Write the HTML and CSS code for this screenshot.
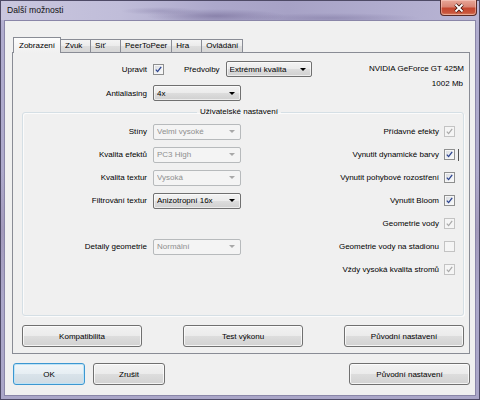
FILE: index.html
```html
<!DOCTYPE html>
<html lang="cs">
<head>
<meta charset="utf-8">
<title>Další možnosti</title>
<link rel="stylesheet" href="styles.css">
</head>
<body>
<div class="window">
  <div class="titlebar">
    <span class="title">Další možnosti</span>
    <div class="close" aria-label="Zavřít">
      <svg width="12" height="10" viewBox="0 0 12 10"><path d="M2.5 1.5 L9.5 8.5 M9.5 1.5 L2.5 8.5" stroke="#3b1109" stroke-width="3.4" fill="none"/><path d="M2.5 1.5 L9.5 8.5 M9.5 1.5 L2.5 8.5" stroke="#fff" stroke-width="1.8" fill="none"/></svg>
    </div>
  </div>
  <div class="client">
    <div class="tabs">
      <div class="tab active">Zobrazení</div>
      <div class="tab">Zvuk</div>
      <div class="tab">Síť</div>
      <div class="tab">PeerToPeer</div>
      <div class="tab">Hra</div>
      <div class="tab">Ovládání</div>
    </div>
    <div class="panel">
      <div class="top">
        <div class="top-grid">
          <span class="lbl">Upravit</span>
          <div class="ctrl-line">
            <span class="chk"><svg width="7" height="7" viewBox="0 0 7 7"><path d="M0.8 3.6 L2.6 5.6 L6.2 0.8" fill="none" stroke="#2c438f" stroke-width="1.3"/></svg></span>
            <span class="preset-lbl">Předvolby</span>
            <div class="combo w-preset"><span class="val">Extrémní kvalita</span><span class="arrow"></span></div>
          </div>
          <span class="lbl">Antialiasing</span>
          <div class="combo w-std"><span class="val">4x</span><span class="arrow"></span></div>
        </div>
        <div class="gpu">
          <span>NVIDIA GeForce GT 425M</span>
          <span>1002 Mb</span>
        </div>
      </div>
      <fieldset class="group">
        <legend>Uživatelské nastavení</legend>
        <div class="row">
          <div class="left"><span class="rlbl">Stíny</span><div class="combo w-std disabled"><span class="val">Velmi vysoké</span><span class="arrow"></span></div></div>
          <div class="right"><span>Přídavné efekty</span><span class="chk disabled"><svg width="7" height="7" viewBox="0 0 7 7"><path d="M0.8 3.6 L2.6 5.6 L6.2 0.8" fill="none" stroke="#a9a9a9" stroke-width="1.2"/></svg></span></div>
        </div>
        <div class="row">
          <div class="left"><span class="rlbl">Kvalita efektů</span><div class="combo w-std disabled"><span class="val">PC3 High</span><span class="arrow"></span></div></div>
          <div class="right"><span>Vynutit dynamické barvy</span><span class="chk"><svg width="7" height="7" viewBox="0 0 7 7"><path d="M0.8 3.6 L2.6 5.6 L6.2 0.8" fill="none" stroke="#2c438f" stroke-width="1.3"/></svg></span><span class="caret"></span></div>
        </div>
        <div class="row">
          <div class="left"><span class="rlbl">Kvalita textur</span><div class="combo w-std disabled"><span class="val">Vysoká</span><span class="arrow"></span></div></div>
          <div class="right"><span>Vynutit pohybové rozostření</span><span class="chk"><svg width="7" height="7" viewBox="0 0 7 7"><path d="M0.8 3.6 L2.6 5.6 L6.2 0.8" fill="none" stroke="#2c438f" stroke-width="1.3"/></svg></span></div>
        </div>
        <div class="row">
          <div class="left"><span class="rlbl">Filtrování textur</span><div class="combo w-std"><span class="val">Anizotropní 16x</span><span class="arrow"></span></div></div>
          <div class="right"><span>Vynutit Bloom</span><span class="chk"><svg width="7" height="7" viewBox="0 0 7 7"><path d="M0.8 3.6 L2.6 5.6 L6.2 0.8" fill="none" stroke="#2c438f" stroke-width="1.3"/></svg></span></div>
        </div>
        <div class="row">
          <div class="left"></div>
          <div class="right"><span>Geometrie vody</span><span class="chk disabled"><svg width="7" height="7" viewBox="0 0 7 7"><path d="M0.8 3.6 L2.6 5.6 L6.2 0.8" fill="none" stroke="#a9a9a9" stroke-width="1.2"/></svg></span></div>
        </div>
        <div class="row">
          <div class="left"><span class="rlbl">Detaily geometrie</span><div class="combo w-std disabled"><span class="val">Normální</span><span class="arrow"></span></div></div>
          <div class="right"><span>Geometrie vody na stadionu</span><span class="chk disabled"></span></div>
        </div>
        <div class="row">
          <div class="left"></div>
          <div class="right"><span>Vždy vysoká kvalita stromů</span><span class="chk disabled"><svg width="7" height="7" viewBox="0 0 7 7"><path d="M0.8 3.6 L2.6 5.6 L6.2 0.8" fill="none" stroke="#a9a9a9" stroke-width="1.2"/></svg></span></div>
        </div>
      </fieldset>
      <div class="panel-buttons">
        <button class="btn btn-panel">Kompatibilita</button>
        <button class="btn btn-panel">Test výkonu</button>
        <button class="btn btn-panel">Původní nastavení</button>
      </div>
    </div>
    <div class="dialog-buttons">
      <button class="btn btn-small default">OK</button>
      <button class="btn btn-small">Zrušit</button>
      <button class="btn btn-reset">Původní nastavení</button>
    </div>
  </div>
</div>
</body>
</html>
```
FILE: styles.css
```css
* { box-sizing: border-box; }
html, body { margin: 0; padding: 0; }
body {
  width: 480px;
  height: 400px;
  overflow: hidden;
  font-family: "Liberation Sans", Arial, sans-serif;
  font-size: 8px;
  color: #000;
  background: #aaa6c8;
}
.window {
  width: 480px;
  height: 400px;
  border: 1px solid #4e4a66;
  background:
    linear-gradient(180deg, rgba(0,0,0,0) 170px, rgba(120,90,120,0.18) 230px, rgba(0,0,0,0) 300px),
    linear-gradient(180deg, #bdb9d7 0, #b0acce 30px, #aaa6c8 100%);
  display: flex;
  flex-direction: column;
}
.titlebar {
  height: 19px;
  flex: none;
  display: flex;
  align-items: flex-start;
  background:
    radial-gradient(ellipse 70px 7px at 215px 15px, rgba(110,100,145,0.55), rgba(110,100,145,0)),
    radial-gradient(ellipse 90px 5px at 330px 17px, rgba(120,112,155,0.45), rgba(120,112,155,0)),
    radial-gradient(ellipse 40px 4px at 160px 10px, rgba(120,112,155,0.35), rgba(120,112,155,0)),
    linear-gradient(90deg, #c9c6de 0%, #c0bdd9 25%, #aca8cb 45%, #a7a2c6 60%, #b0acce 80%, #b9b5d4 100%);
}
.title {
  padding-left: 6px;
  line-height: 19px;
  font-size: 8.6px;
  color: #111;
}
.close {
  margin-left: auto;
  margin-right: 2px;
  margin-top: -1px;
  width: 37px;
  height: 16px;
  border: 1px solid #5a2a26;
  border-top: none;
  border-radius: 0 0 4px 4px;
  background: linear-gradient(180deg, #e8a798 0%, #d98574 45%, #c4472f 55%, #c9553c 85%, #d98a6c 100%);
  box-shadow: inset 0 0 0 1px rgba(255,220,210,0.45);
  display: flex;
  align-items: center;
  justify-content: center;
}
.client {
  margin: 0 3px 3px;
  height: 376px;
  border: 1px solid #8a86a8;
  background: #f0f0f0;
  padding: 16px 5px 10px 7px;
  display: flex;
  flex-direction: column;
}
.tabs {
  display: flex;
  align-items: flex-end;
  height: 16px;
  margin: 0 0 -1px 1px;
  position: relative;
  z-index: 1;
  flex: none;
}
.tab {
  height: 13px;
  margin-bottom: 1px;
  margin-right: -1px;
  min-width: 31px;
  padding: 0 4px;
  border: 1px solid #898c95;
  border-bottom: none;
  line-height: 11px;
  white-space: nowrap;
  background: linear-gradient(180deg, #f4f4f4 0%, #ebebeb 50%, #dedede 51%, #d6d6d6 100%);
}
.tab.active {
  height: 16px;
  margin-bottom: 0;
  padding: 0 5px;
  line-height: 15px;
  background: linear-gradient(180deg, #fdfdfd 0%, #f4f4f4 60%, #f0f0f0 100%);
  position: relative;
  z-index: 2;
}
.panel {
  flex: none;
  height: 302px;
  border: 1px solid #898c95;
  background: #f0f0f0;
  padding: 8px 5px 6px 9px;
  display: flex;
  flex-direction: column;
}
.top {
  display: flex;
  height: 40px;
  flex: none;
}
.top-grid {
  display: grid;
  grid-template-columns: 125px auto;
  grid-template-rows: 16px 16px;
  column-gap: 6px;
  row-gap: 8px;
  align-items: center;
}
.lbl { justify-self: end; white-space: nowrap; }
.ctrl-line {
  display: flex;
  align-items: center;
}
.preset-lbl { margin-left: 20px; margin-right: 6px; white-space: nowrap; }
.gpu {
  margin-left: auto;
  display: flex;
  flex-direction: column;
  align-items: flex-end;
  padding-top: 3px;
  row-gap: 5px;
  line-height: 10px;
}
.gpu span:last-child { margin-right: 1px; }
.combo {
  display: flex;
  align-items: center;
  height: 16px;
  border: 1px solid #707070;
  border-radius: 2px;
  padding: 0 5px 0 3px;
  background: linear-gradient(180deg, #f3f3f3 0%, #ebebeb 50%, #dddddd 51%, #d0d0d0 100%);
  box-shadow: inset 0 0 0 1px rgba(255,255,255,0.6);
  white-space: nowrap;
}
.combo .val { flex: 1; overflow: hidden; }
.arrow {
  width: 0;
  height: 0;
  border-left: 3px solid transparent;
  border-right: 3px solid transparent;
  border-top: 3px solid #000;
}
.combo.disabled {
  border-color: #b7babc;
  background: #f4f4f4;
  box-shadow: none;
  color: #8f8f8f;
}
.combo.disabled .arrow { border-top-color: #a8a8a8; }
.w-preset { width: 86px; }
.w-std { width: 88px; }
.chk {
  width: 11px;
  height: 11px;
  flex: none;
  border: 1px solid #8e8f8f;
  background: linear-gradient(135deg, #d6d8dc 0%, #eef0f2 60%, #fbfbfb 100%);
  box-shadow: inset 0 0 0 1px #f6f6f6;
  display: flex;
  align-items: center;
  justify-content: center;
}
.chk.disabled {
  border-color: #c3c3c3;
  background: #f5f5f5;
  box-shadow: none;
}
.group {
  margin: 6px 0 0;
  padding: 3px 8px 34px 0;
  border: 1px solid #d5dfe5;
  border-radius: 3px;
  box-shadow: inset 1px 1px 0 #fbfbfb, 1px 1px 0 #fbfbfb;
  min-width: 0;
  flex: none;
}
.group legend {
  margin-left: auto;
  margin-right: auto;
  padding: 0 3px;
  line-height: 10px;
}
.row {
  display: flex;
  align-items: center;
  height: 23px;
}
.row .left {
  display: flex;
  align-items: center;
  width: 218px;
}
.rlbl {
  width: 124px;
  margin-right: 6px;
  text-align: right;
  white-space: nowrap;
}
.row .right {
  margin-left: auto;
  display: flex;
  align-items: center;
  gap: 5px;
  white-space: nowrap;
}
.caret {
  width: 1px;
  height: 12px;
  background: #555;
  margin-left: -2px;
  margin-right: -4px;
}
.panel-buttons {
  display: flex;
  justify-content: space-between;
  margin-top: 9px;
  flex: none;
}
.btn {
  height: 22px;
  font-family: inherit;
  font-size: 8px;
  color: #000;
  border: 1px solid #707070;
  border-radius: 3px;
  padding: 0;
  background: linear-gradient(180deg, #f2f2f2 0%, #ebebeb 50%, #dddddd 51%, #d2d2d2 100%);
  box-shadow: inset 0 0 0 1px rgba(255,255,255,0.75);
}
.btn-panel { width: 120px; }
.btn-small { width: 72px; }
.btn-reset { width: 121px; margin-left: auto; }
.btn.default {
  border-color: #3c97d1;
  background: linear-gradient(180deg, #f1f6f9 0%, #e6eef3 50%, #d9e3ea 51%, #d0dbe3 100%);
  box-shadow: inset 0 0 0 1px #bfe3f6;
}
.dialog-buttons {
  display: flex;
  gap: 8px;
  margin-top: 9px;
  padding-left: 1px;
  flex: none;
}
```
